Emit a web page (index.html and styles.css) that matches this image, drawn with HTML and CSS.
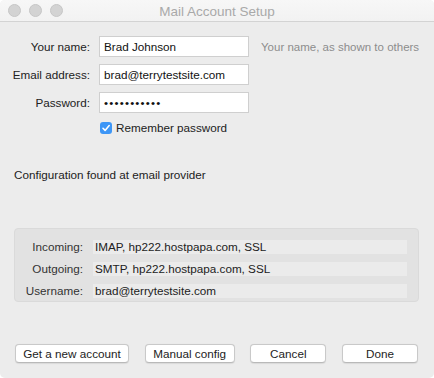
FILE: index.html
```html
<!DOCTYPE html>
<html lang="en">
<head>
  <meta charset="UTF-8">
  <meta name="viewport" content="width=device-width, initial-scale=1.0">
  <title>Mail Account Setup</title>
  <link rel="stylesheet" href="styles.css">
</head>
<body>

  <div class="window">
    <div class="titlebar">
      <div class="lights">
        <span class="light"></span>
        <span class="light"></span>
        <span class="light"></span>
      </div>
      <div class="title">Mail Account Setup</div>
    </div>

    <div class="form">
      <label class="label" for="name">Your name:</label>
      <input class="field" id="name" type="text" value="Brad Johnson">
      <span class="hint">Your name, as shown to others</span>

      <label class="label" for="email">Email address:</label>
      <input class="field" id="email" type="text" value="brad@terrytestsite.com">
      <span></span>

      <label class="label" for="password">Password:</label>
      <input class="field" id="password" type="password" value="secretpass1">
      <span></span>

      <span></span>
      <label class="remember">
        <span class="checkbox">
          <svg width="12" height="12" viewBox="0 0 12 12">
            <path d="M3 6.3 L5.1 8.4 L9.2 3.6" fill="none" stroke="#fff" stroke-width="1.6" stroke-linecap="round" stroke-linejoin="round"/>
          </svg>
        </span>
        Remember password
      </label>
    </div>

    <div class="status">Configuration found at email provider</div>

    <div class="config">
      <span class="config-label">Incoming:</span>
      <span class="config-value">IMAP, hp222.hostpapa.com, SSL</span>
      <span class="config-label">Outgoing:</span>
      <span class="config-value">SMTP, hp222.hostpapa.com, SSL</span>
      <span class="config-label">Username:</span>
      <span class="config-value">brad@terrytestsite.com</span>
    </div>

    <div class="buttons">
      <button class="btn btn-new">Get a new account</button>
      <button class="btn btn-manual">Manual config</button>
      <button class="btn btn-small">Cancel</button>
      <button class="btn btn-small">Done</button>
    </div>
  </div>

</body>
</html>
```

FILE: styles.css
```css
body {
  margin: 0;
  background-color: #ffffff;
  font-family: 'Liberation Sans', Arial, sans-serif;
  font-size: 11.7px;
  color: #222222;
}

.window {
  width: 434px;
  height: 378px;
  background-color: #ececec;
  border-radius: 5px;
  overflow: hidden;
  display: flex;
  flex-direction: column;
}

.titlebar {
  height: 21px;
  border-bottom: 1px solid #d3d3d3;
  background: linear-gradient(#f7f7f7, #f2f2f2);
  display: grid;
  grid-template-columns: 1fr auto 1fr;
  align-items: center;
}

.lights {
  display: flex;
  gap: 8px;
  padding-left: 8px;
}

.light {
  width: 11px;
  height: 11px;
  border-radius: 50%;
  background-color: #d3d3d3;
  border: 0.5px solid #c6c6c6;
}

.title {
  font-size: 13.5px;
  color: #a9a9a9;
  padding-top: 1px;
}

.form {
  margin-top: 14px;
  display: grid;
  grid-template-columns: 90px 150px auto;
  grid-template-rows: 21px 21px 21px 14px;
  column-gap: 9px;
  row-gap: 7px;
  align-items: center;
}

.form .remember {
  margin-top: 1px;
}

.label {
  text-align: right;
  color: #222222;
}

.field {
  box-sizing: border-box;
  width: 150px;
  height: 21px;
  margin: 0;
  padding: 0 4px;
  border: 1px solid #cfcfcf;
  border-radius: 0;
  background-color: #ffffff;
  font-family: 'Liberation Sans', Arial, sans-serif;
  font-size: 11.7px;
  color: #111111;
  outline: none;
}

#password {
  letter-spacing: 1.2px;
  font-size: 11.5px;
}

.hint {
  margin-left: 3px;
  font-size: 11.5px;
  color: #8c8c8c;
}

.remember {
  display: flex;
  align-items: center;
  gap: 4px;
  margin-left: 1px;
  color: #222222;
}

.checkbox {
  width: 12px;
  height: 12px;
  border-radius: 3px;
  background-color: #3d96f6;
  display: flex;
}

.status {
  margin-top: 34px;
  margin-left: 14px;
  line-height: 14px;
}

.config {
  margin: 46px 15px 0 14px;
  padding: 11px 11px 3px 0;
  border: 1px solid #dadada;
  border-radius: 4px;
  background-color: #e2e2e2;
  display: grid;
  grid-template-columns: 68px 1fr;
  column-gap: 10px;
  row-gap: 8px;
  line-height: 14px;
}

.config-label {
  text-align: right;
  color: #333333;
}

.config-value {
  background-color: #ebebeb;
  padding-left: 2px;
  color: #222222;
}

.buttons {
  margin-top: 42px;
  padding: 0 16px 0 15px;
  display: flex;
  justify-content: space-between;
}

.btn {
  height: 19px;
  padding: 0;
  border: 1px solid #c9c9c9;
  border-bottom-color: #b9b9b9;
  border-radius: 4px;
  background-color: #ffffff;
  font-family: 'Liberation Sans', Arial, sans-serif;
  font-size: 11.7px;
  color: #1c1c1c;
  box-shadow: 0 0.5px 1px rgba(0, 0, 0, 0.08);
}

.btn-new {
  width: 114px;
}

.btn-manual {
  width: 90px;
}

.btn-small {
  width: 76px;
}
```
